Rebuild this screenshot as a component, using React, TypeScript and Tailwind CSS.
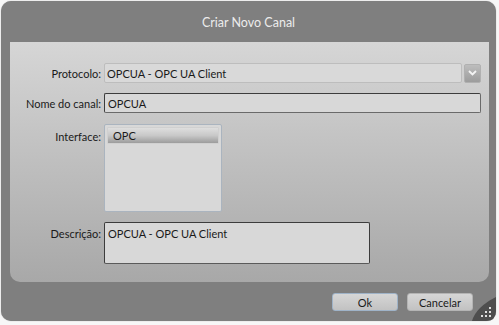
import React from "react";

const font = { fontFamily: 'Lato, "Noto Sans", sans-serif' };

export default function App() {
  return (
    <div className="w-[499px] h-[325px] bg-[#f7f7f7] pt-[1px] pl-[1px]" style={font}>
      <div className="relative w-[495px] h-[320px] rounded-[10px] bg-[#7f7f7f] flex flex-col shadow-[0_0_1px_rgba(0,0,0,0.4)]">
        <div className="h-[41px] flex items-center justify-center text-[12.5px] text-[#ececec] pt-[4px]">
          Criar Novo Canal
        </div>
        <div className="ml-[9px] w-[479px] h-[240px] rounded-b-[10px] bg-gradient-to-b from-[#d6d6d6] to-[#a8a8a8] pt-[21px] text-[11px] text-[#1a1a1a]">
          <div className="flex items-center h-[20px]">
            <div className="w-[91px] mr-[3px] text-right leading-none">Protocolo:</div>
            <div className="w-[358px] h-[20px] border border-[#bdbdbd] bg-[#d9d9d9] rounded-[2px] flex items-center pl-[2px] leading-none">
              OPCUA - OPC UA Client
            </div>
            <div className="ml-[2px] w-[17px] h-[19px] border border-[#b0b0b0] rounded-[2px] bg-gradient-to-b from-[#bdbdbd] to-[#9c9c9c] flex items-center justify-center">
              <svg width="9" height="6" viewBox="0 0 9 6">
                <path d="M1 1 L4.5 4.5 L8 1" stroke="#f4f4f4" strokeWidth="1.8" fill="none" />
              </svg>
            </div>
          </div>
          <div className="flex items-center h-[20px] mt-[10px]">
            <div className="w-[91px] mr-[3px] text-right leading-none">Nome do canal:</div>
            <div className="w-[377px] h-[20px] border border-[#3c3c3c] border-b-[#6a6a6a] border-r-[#6a6a6a] bg-[#d8d8d8] rounded-[2px] flex items-center pl-[3px] leading-none">
              OPCUA
            </div>
          </div>
          <div className="flex mt-[11px]">
            <div className="w-[91px] mr-[3px] text-right leading-none pt-[7px]">Interface:</div>
            <div className="w-[118px] h-[88px] border border-[#aab4bf] bg-[#d8d8d8] rounded-[2px] pt-[2px] px-[2px]">
              <div className="h-[17px] border border-[#d0d0d0] rounded-[1px] bg-gradient-to-b from-[#dedede] via-[#c8c8c8] to-[#9c9c9c] flex items-center pl-[5px] leading-none">
                OPC
              </div>
            </div>
          </div>
          <div className="flex mt-[10px]">
            <div className="w-[91px] mr-[3px] text-right leading-none pt-[6px]">Descrição:</div>
            <div className="w-[266px] h-[42px] border border-[#3c3c3c] border-b-[#5a5a5a] bg-[#d8d8d8] rounded-[2px] pl-[3px] pt-[5px] leading-none">
              OPCUA - OPC UA Client
            </div>
          </div>
        </div>
        <div className="flex justify-end items-start pt-[11px] pr-[23px] gap-[9px] text-[11px] text-[#1a1a1a]">
          <div className="w-[66px] h-[18px] rounded-[3px] border border-[#9fb3c8] bg-gradient-to-b from-[#d6d6d6] to-[#c2c2c2] flex items-center justify-center leading-none">
            Ok
          </div>
          <div className="w-[66px] h-[18px] rounded-[3px] border border-[#b4b4b4] bg-gradient-to-b from-[#d6d6d6] to-[#c2c2c2] flex items-center justify-center leading-none">
            Cancelar
          </div>
        </div>
        <svg className="absolute right-0 bottom-0" width="24" height="24" viewBox="0 0 24 24">
          <path d="M24 0 L24 14 Q24 24 14 24 L0 24 Q4 10 24 0 Z" fill="#4e4e4e" />
          <g fill="#e0e0e0">
            <rect x="17" y="10" width="2" height="2" />
            <rect x="13" y="14" width="2" height="2" />
            <rect x="17" y="14" width="2" height="2" />
            <rect x="9" y="18" width="2" height="2" />
            <rect x="13" y="18" width="2" height="2" />
            <rect x="17" y="18" width="2" height="2" />
          </g>
        </svg>
      </div>
    </div>
  );
}
